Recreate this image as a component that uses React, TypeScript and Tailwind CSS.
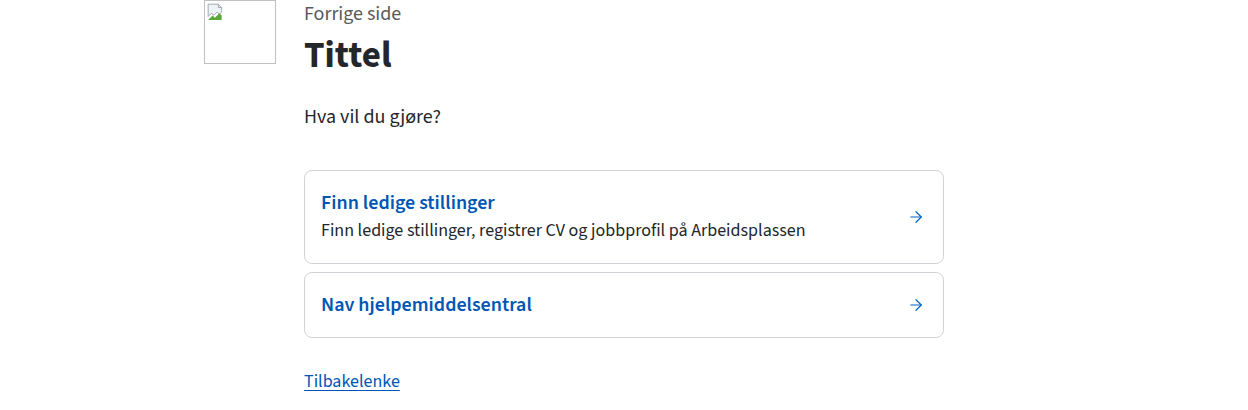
import { ArrowRight } from "lucide-react";

const font = { fontFamily: '"Source Sans 3", Lato, "Noto Sans", sans-serif' };

type Panel = { title: string; description?: string };

const panels: Panel[] = [
  {
    title: "Finn ledige stillinger",
    description:
      "Finn ledige stillinger, registrer CV og jobbprofil på Arbeidsplassen",
  },
  { title: "Nav hjelpemiddelsentral" },
];

function BrokenImage() {
  return (
    <div className="relative h-[64px] w-[72px] shrink-0 border border-[#c0c0c0] bg-white">
      <svg
        className="absolute left-[2px] top-[2px]"
        width="18"
        height="18"
        viewBox="0 0 16 16"
      >
        <path d="M1 1h9l3 3v4l-2 2-2-2-3 3-2-2-3 3z" fill="#eef3f8" stroke="#9aa4ad" strokeWidth="0.8" />
        <path d="M10 1v3h3" fill="none" stroke="#9aa4ad" strokeWidth="0.8" />
        <path d="M1 15l4-4 2 2 4-4 2 2v4z" fill="#5aa83b" />
      </svg>
    </div>
  );
}

export default function App() {
  return (
    <div className="min-h-[410px] bg-white text-[#23262a]" style={font}>
      <div className="flex gap-[28px] pl-[204px]">
        <BrokenImage />
        <main className="w-[640px]">
          <p className="text-[20px] leading-[28px] text-[#595959]">Forrige side</p>
          <h1 className="mt-[4px] text-[37px] font-bold leading-[48px] text-[#23262a]">
            Tittel
          </h1>
          <p className="mt-[23px] text-[20px] leading-[28px]">Hva vil du gjøre?</p>

          <div className="mt-[39px] flex flex-col gap-[8px]">
            {panels.map((panel) => (
              <a
                key={panel.title}
                href="#"
                className="flex items-center justify-between rounded-[8px] border border-[#cfd3d8] py-[20px] pl-[16px] pr-[18px]"
              >
                <div>
                  <p className="text-[20px] font-semibold leading-[24px] text-[#0056b4]">
                    {panel.title}
                  </p>
                  {panel.description ? (
                    <p className="mt-[4px] text-[18px] leading-[24px] text-[#23262a]">
                      {panel.description}
                    </p>
                  ) : null}
                </div>
                <ArrowRight className="h-[18px] w-[18px] text-[#0067c5]" strokeWidth={1.6} />
              </a>
            ))}
          </div>

          <a
            href="#"
            className="mt-[32px] inline-block text-[18px] leading-[24px] text-[#0056b4] underline underline-offset-[3px]"
          >
            Tilbakelenke
          </a>
        </main>
      </div>
    </div>
  );
}
